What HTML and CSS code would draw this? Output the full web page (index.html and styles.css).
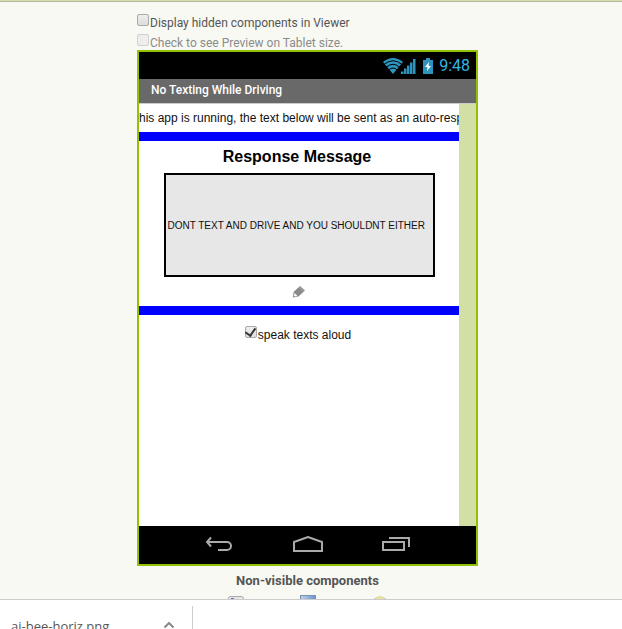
FILE: index.html
```html
<!DOCTYPE html>
<html lang="en">
<head>
<meta charset="utf-8">
<title>Viewer</title>
<link rel="stylesheet" href="styles.css">
</head>
<body>
<main class="viewer">
  <div class="designer">
    <label class="option"><input class="check" type="checkbox"><span>Display hidden components in Viewer</span></label>
    <label class="option disabled"><input class="check" type="checkbox" disabled><span>Check to see Preview on Tablet size.</span></label>
    <section class="phone">
      <div class="status">
        <svg width="34" height="18" viewBox="0 0 34 18">
          <path d="M0 5Q10-3 20 5L10 17z" fill="#2e94bd"/>
          <g fill="none" stroke="#000" stroke-width="1">
            <path d="M1 7.500Q10 0 19 7.500"/><path d="M3 10.500Q10 4 17 10.500"/><path d="M5 13.500Q10 8.500 15 13.500"/>
          </g>
          <path d="M18 14.500h2.500V17H18zM21 11.500h2.500V17H21zM24 8.500h2.500V17H24zM27 5.500h2.500V17H27zM30 2h2.500v15H30z" fill="#2e94bd"/>
        </svg>
        <svg width="10" height="16" viewBox="0 0 10 16">
          <path d="M3 0h4v2h3v14H0V2h3z" fill="#2e94bd"/><path d="M6 4L2 9h2.500L4 13l4-5H5.500z" fill="#fff"/>
        </svg>
        <span>9:48</span>
      </div>
      <header class="titlebar">No Texting While Driving</header>
      <div class="screen">
        <div class="canvas">
          <p class="notice">his app is running, the text below will be sent as an auto-resp</p>
          <div class="rule"></div>
          <h2 class="heading">Response Message</h2>
          <div class="message">DONT TEXT AND DRIVE AND YOU SHOULDNT EITHER</div>
          <button class="edit" aria-label="Edit">
            <svg width="16" height="14" viewBox="0 0 16 14">
              <path d="M2.500 7L9 1l5 4.500L7.500 11.500L2 12.500z" fill="#8b8b8b"/><path d="M3.500 8L6.500 11L4 11.500L3 10.500z" fill="#fff"/><path d="M8 2l5 4.500" stroke="#aaa"/>
            </svg>
          </button>
          <div class="rule"></div>
          <label class="speak"><input class="check" type="checkbox" checked><span>speak texts aloud</span></label>
        </div>
      </div>
      <nav class="navbar">
        <button aria-label="Back"><svg width="28" height="18" viewBox="0 0 28 18"><path d="M6 1.500L2 6l4 4.500M2 6h20a4 4 0 0 1 0 8h-9"/></svg></button>
        <button aria-label="Home"><svg width="30" height="18" viewBox="0 0 30 18"><path d="M1 15V6L15 1l14 5v9z"/></svg></button>
        <button aria-label="Recent apps"><svg width="28" height="18" viewBox="0 0 28 18"><path d="M1 6h21v8H1zM7 2h20v9"/></svg></button>
      </nav>
    </section>
    <h3 class="nonvisible">Non-visible components</h3>
    <div class="components">
      <svg width="16" height="16" viewBox="0 0 16 16"><rect x=".5" y="1.500" width="15" height="14" rx="2" fill="#e4e6e8" stroke="#a9a9a9"/><path d="M3 3h3v1H3z" fill="#5575b5"/></svg>
      <svg width="16" height="16" viewBox="0 0 16 16"><defs><linearGradient id="sky"><stop stop-color="#bcd3ed"/><stop offset="1" stop-color="#6d93c8"/></linearGradient></defs><rect x=".5" y=".5" width="15" height="15" fill="url(#sky)" stroke="#7d91ad"/></svg>
      <svg width="16" height="16" viewBox="0 0 16 16"><ellipse cx="8" cy="8" rx="8" ry="6.500" fill="#c5c5b5"/><ellipse cx="8" cy="7" rx="5" ry="6" fill="#e8df9a"/></svg>
    </div>
  </div>
</main>
<footer class="downloads">
  <div class="download">
    <span>ai-bee-horiz.png</span>
    <button aria-label="Download options"><svg width="12" height="8" viewBox="0 0 12 8"><path d="M1.500 5.500L6 1l4.500 4.500"/></svg></button>
  </div>
</footer>
</body>
</html>
```
FILE: styles.css
```css
* { box-sizing: border-box; }
body {
  margin: 0;
  height: 100vh;
  display: flex;
  flex-direction: column;
  overflow: hidden;
  background: #f8f9f3;
  color: #555;
  font: 12px/20px Roboto, sans-serif;
}
button { border: 0; padding: 0; background: none; display: flex; }
svg { display: block; flex: none; }
.viewer {
  flex: 1;
  min-height: 0;
  overflow: hidden;
  border-top: 1px solid #d2e0a6;
  box-shadow: inset 0 1px #b4b8a8;
  padding: 11px 15px 0 8px;
}
.designer { width: 341px; margin: 0 auto; }
.option { display: flex; height: 20px; }
.option span { padding-top: 1px; }
.disabled { color: #8b8b8b; height: 18px; }
.check {
  appearance: none;
  flex: none;
  width: 12px;
  height: 12px;
  margin: 2px 1px 0 0;
  border: 1px solid #aaa;
  border-radius: 2px;
  background: linear-gradient(#eee, #ddd);
}
.check:disabled { border-color: #d0d0d0; background: #eee; }
.check:checked::after {
  content: "";
  display: block;
  width: 5px;
  height: 8px;
  margin: 0 0 0 3px;
  border: solid #333;
  border-width: 0 2px 2px 0;
  transform: rotate(35deg);
}
.phone { border: 2px solid #92c100; background: #fff; }
.status {
  height: 27px;
  padding-right: 6px;
  display: flex;
  align-items: center;
  justify-content: flex-end;
  gap: 6px;
  background: #000;
  color: #35b5e5;
  font-size: 16px;
}
.titlebar {
  height: 25px;
  padding: 0 12px;
  border-bottom: 1px solid #ccc;
  background: #696969;
  color: #fff;
  font-weight: 500;
  line-height: 22px;
}
.screen { height: 422px; padding-right: 17px; background: #d2e0a6; }
.canvas {
  height: 100%;
  display: flex;
  flex-direction: column;
  align-items: center;
  background: #fff;
  color: #111;
  font-family: "Liberation Sans", Arial, sans-serif;
}
.notice { width: 100%; margin: 0; height: 28px; line-height: 28px; white-space: nowrap; overflow: hidden; }
.rule { width: 100%; height: 9px; background: #00f; }
.heading { margin: 0; padding-right: 4px; color: #000; font-size: 16px; line-height: 32px; }
.message {
  width: 271px;
  height: 104px;
  padding: 0 2px;
  border: 2px solid #000;
  background: #e7e7e7;
  font-size: 10px;
  line-height: 102px;
  white-space: nowrap;
}
.edit { height: 29px; align-items: center; }
.speak { display: flex; margin-top: 9px; padding-right: 2px; }
.speak span { padding-top: 1px; }
.speak .check { display: flex; align-items: center; justify-content: center; }
.speak .check::after { flex: none; width: 5px; height: 8px; margin: 0 0 2px; }
.navbar {
  height: 38px;
  padding: 0 66px;
  display: flex;
  align-items: center;
  justify-content: space-between;
  background: #000;
}
.navbar path { fill: none; stroke: #aaa; stroke-width: 2; }
.nonvisible { margin: 5px 0 4px; font-size: 13px; line-height: 20px; text-align: center; }
.components { display: flex; justify-content: center; gap: 56px; }
.downloads {
  flex: none;
  height: 30px;
  padding-top: 6px;
  overflow: hidden;
  border-top: 1px solid #ccc;
  background: #fff;
}
.download {
  width: 193px;
  height: 40px;
  padding: 0 17px 0 11px;
  display: flex;
  align-items: center;
  justify-content: space-between;
  border-right: 1px solid #ccc;
  font: 13px/20px "Open Sans", sans-serif;
}
.download path { fill: none; stroke: #888; stroke-width: 2; }
```
